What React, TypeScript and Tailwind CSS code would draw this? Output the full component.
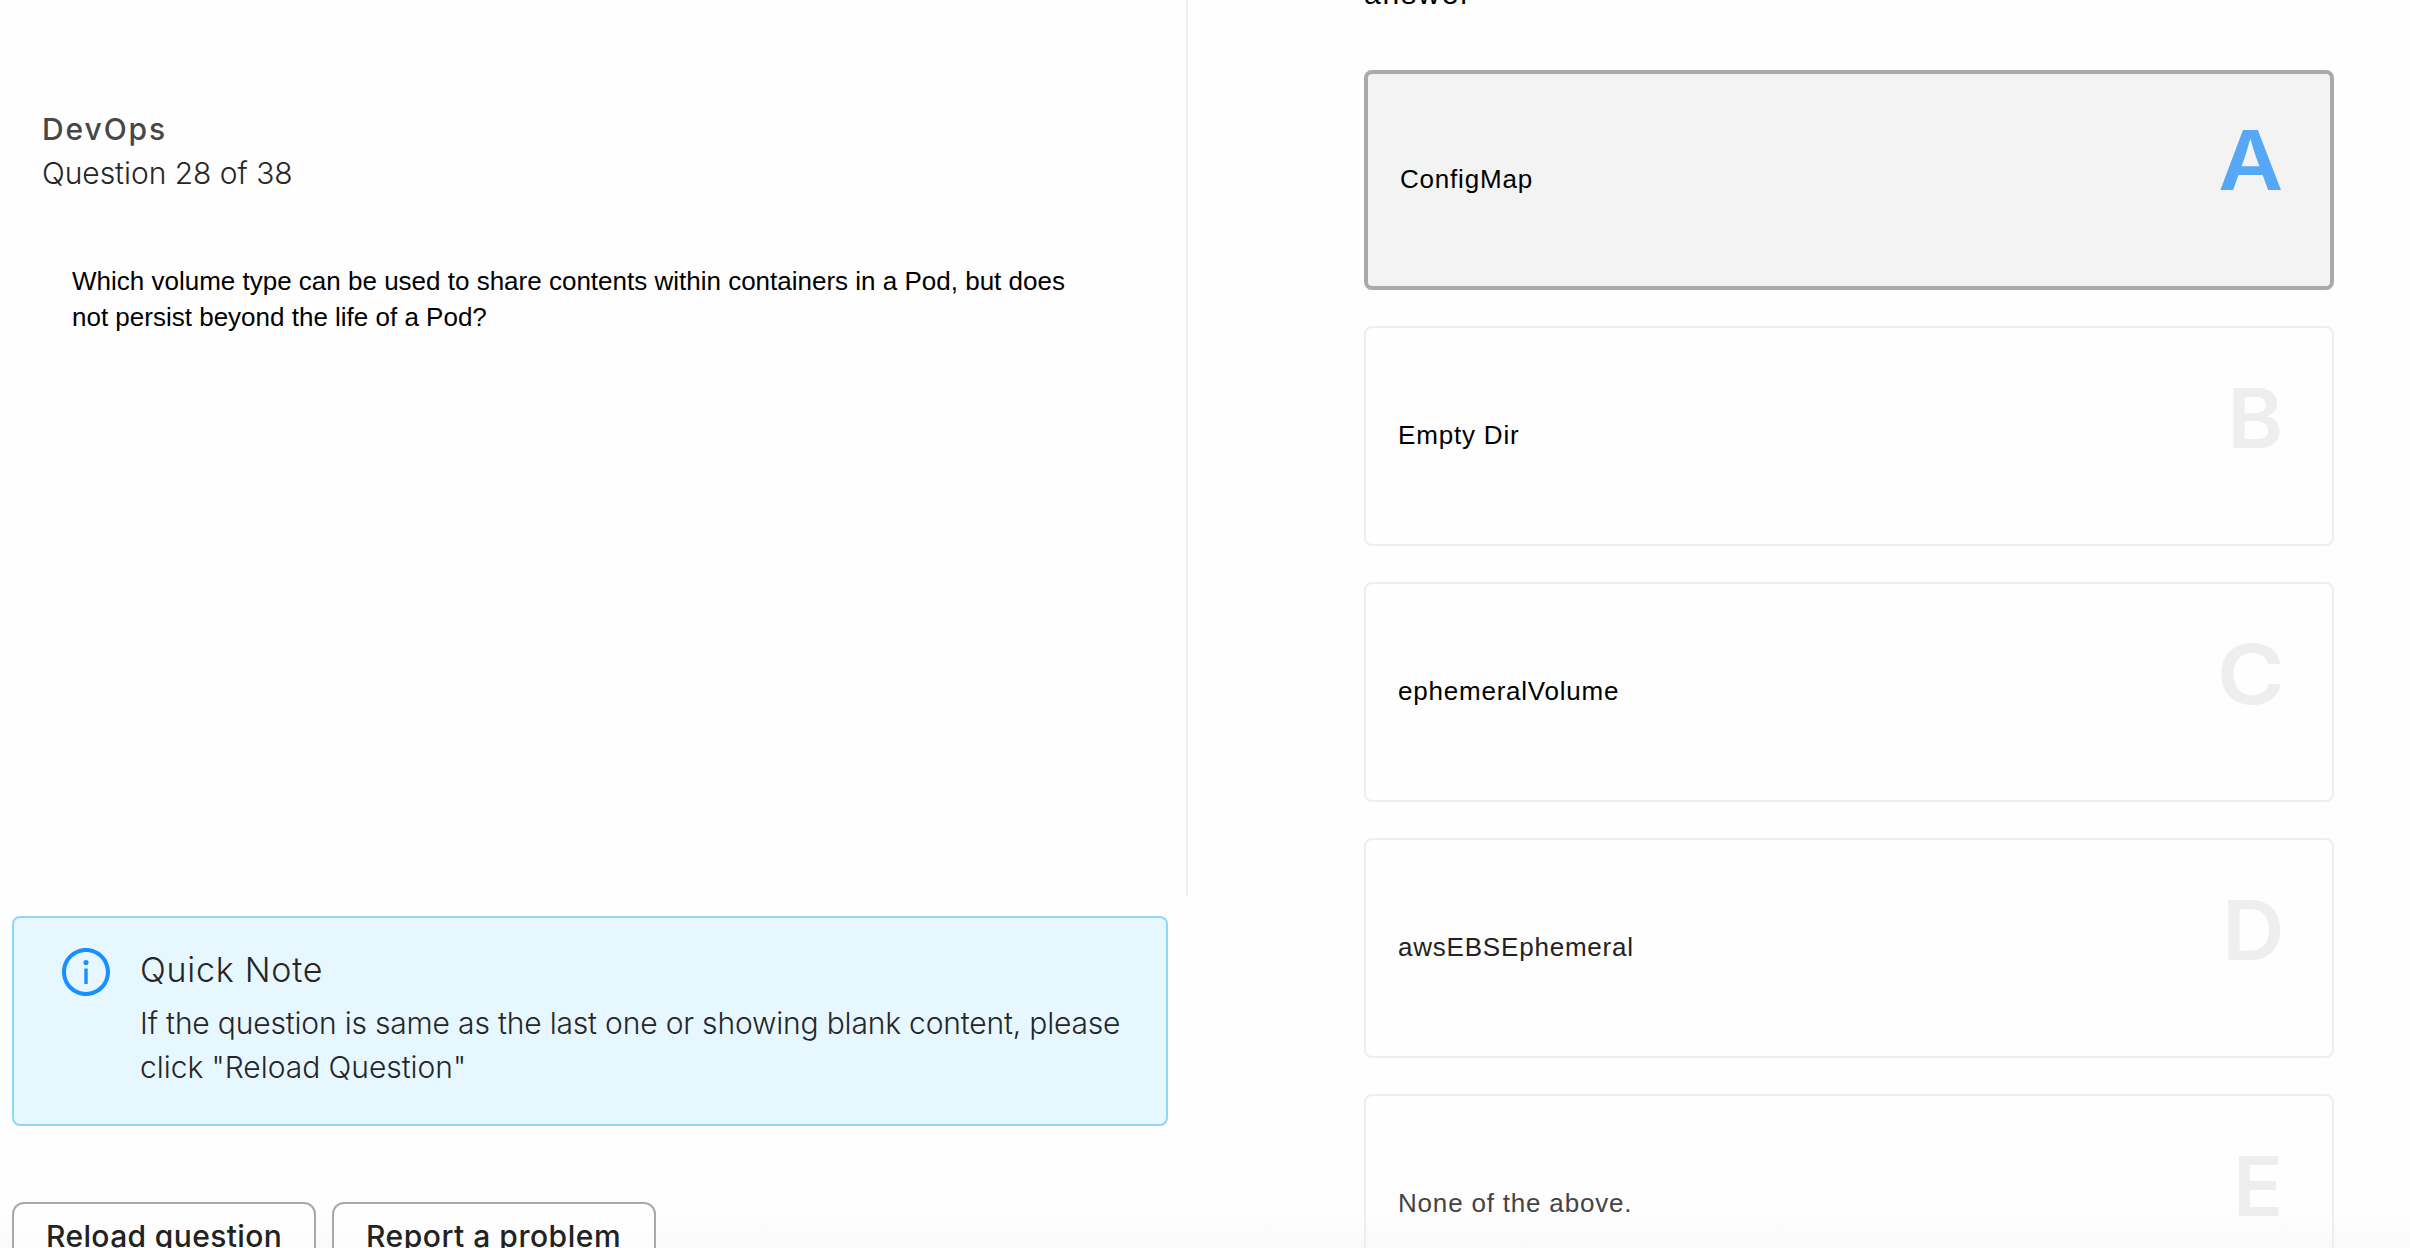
type Option = {
  letter: string;
  label: string;
  labelClass: string;
  letterClass?: string;
  selected?: boolean;
};

const options: Option[] = [
  {
    letter: "A",
    label: "ConfigMap",
    labelClass: "text-black tracking-[0.8px]",
    letterClass: "origin-right scale-x-[1.08]",
    selected: true,
  },
  { letter: "B", label: "Empty Dir", labelClass: "text-black tracking-[0.82px]", letterClass: "origin-right scale-x-[1.03]" },
  {
    letter: "C",
    label: "ephemeralVolume",
    labelClass: "text-black tracking-[0.78px]",
    letterClass: "-mr-[2px] origin-right scale-x-[1.12]",
  },
  {
    letter: "D",
    label: "awsEBSEphemeral",
    labelClass: "text-[#222222] tracking-[0.79px]",
    letterClass: "-mr-[2px] origin-right scale-x-[1.05]",
  },
  { letter: "E", label: "None of the above.", labelClass: "text-[#444444] tracking-[0.81px]" },
];

function InfoIcon() {
  return (
    <svg viewBox="64 64 896 896" className="size-12 shrink-0 fill-[#1890ff]" aria-hidden="true">
      <path d="M512 64C264.6 64 64 264.6 64 512s200.6 448 448 448 448-200.6 448-448S759.4 64 512 64zm0 820c-205.4 0-372-166.6-372-372s166.6-372 372-372 372 166.6 372 372-166.6 372-372 372z" />
      <path d="M464 336a48 48 0 1 0 96 0 48 48 0 1 0-96 0zm72 112h-48c-4.4 0-8 3.6-8 8v272c0 4.4 3.6 8 8 8h48c4.4 0 8-3.6 8-8V456c0-4.4-3.6-8-8-8z" />
    </svg>
  );
}

function OptionCard({ letter, label, labelClass, letterClass = "", selected }: Option) {
  const frame = selected
    ? "border-4 border-[#a9a9a9] bg-[#f3f3f3] pr-[47px]"
    : "border-2 border-[#eeeeee] pr-[49px]";
  const tone = selected ? "mt-[44px] text-[#57a7f7]" : "mt-[48px] text-[#eeeeee]";
  return (
    <button className={`flex h-[220px] w-full shrink-0 items-start justify-between rounded-lg pl-8 ${frame}`}>
      <span className={`self-center pb-[2px] text-[26px] leading-9 ${labelClass}`}>{label}</span>
      <span className={`font-['Inter'] text-[82.5px] leading-[84px] font-semibold ${tone} ${letterClass}`}>{letter}</span>
    </button>
  );
}

export default function App() {
  return (
    <div className="flex h-[1248px] w-[2410px] overflow-hidden bg-[linear-gradient(to_bottom,#fefefe_0,#fefefe_1205px,#fafafa_1248px)] font-['Liberation_Sans',sans-serif]">
      <main className="flex w-[1188px] shrink-0 flex-col">
        <section className="h-[896px] shrink-0 border-r-2 border-[#efefef] pt-[107px] pl-[42px]">
          <h1 className="font-['Inter'] text-[30px] leading-[44px] font-medium tracking-[1.9px] text-[#474747]">
            DevOps
          </h1>
          <p className="font-['Inter'] text-[30px] leading-[44px] font-[340] tracking-[-0.05px] text-[#262626]">
            Question 28 of 38
          </p>
          <p className="mt-[68px] ml-[30px] text-[26px] leading-9 whitespace-nowrap text-black">
            Which volume type can be used to share contents within containers in a Pod, but does
            <br />
            not persist beyond the life of a Pod?
          </p>
        </section>

        <aside className="mt-5 ml-3 flex h-[210px] w-[1156px] shrink-0 items-start rounded-lg border-2 border-[#91d5ff] bg-[#e6f7ff] pt-[30px] pl-12 font-['Inter'] text-[#262626]">
          <InfoIcon />
          <div className="ml-[30px]">
            <h2 className="text-[34px] leading-[44px] font-light tracking-[0.75px]">Quick Note</h2>
            <p className="mt-[9px] text-[30px] leading-[44px] font-light tracking-[-0.18px] whitespace-nowrap">
              If the question is same as the last one or showing blank content, please
              <br />
              <span className="tracking-[-0.04px]">click "Reload Question"</span>
            </p>
          </div>
        </aside>

        <div className="mt-[76px] ml-3 flex gap-4 font-['Inter'] text-[30px] leading-[44px] font-medium text-[#222222]">
          <button className="flex h-16 w-[304px] shrink-0 rounded-xl border-2 border-[#a9a9a9] bg-white/60 pt-[10px] pl-8 tracking-[0.38px] whitespace-nowrap">
            Reload question
          </button>
          <button className="flex h-16 w-[324px] shrink-0 rounded-xl border-2 border-[#a9a9a9] bg-white/60 pt-[10px] pl-8 tracking-[0.52px] whitespace-nowrap">
            Report a problem
          </button>
        </div>
      </main>

      <section className="ml-[176px] flex w-[970px] shrink-0 flex-col">
        <h2 className="-mt-6 text-[30px] leading-9 tracking-[1.9px] text-black">answer</h2>
        <div className="mt-[58px] flex flex-col gap-9">
          {options.map((option) => (
            <OptionCard key={option.letter} {...option} />
          ))}
        </div>
      </section>
    </div>
  );
}
